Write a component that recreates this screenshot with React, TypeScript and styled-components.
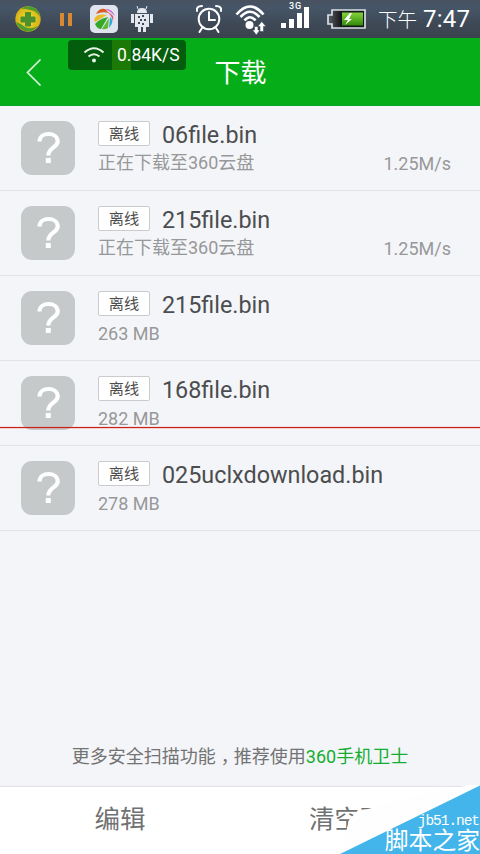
import React from "react";
import styled, { createGlobalStyle } from "styled-components";

const Global = createGlobalStyle`
  * { box-sizing: border-box; }
  body { margin: 0; background: #f4f5f8; font-family: Roboto, "Noto Sans CJK SC", sans-serif; overflow: hidden; }
`;

const Screen = styled.div`
  position: relative;
  display: flex;
  flex-direction: column;
  width: 480px;
  height: 854px;
  overflow: hidden;
  background: #f4f5f8;
`;

const StatusBar = styled.div`
  display: flex;
  align-items: center;
  height: 38px;
  flex: none;
  background: linear-gradient(#48515f 0, #465668 20%, #3e4855 65%, #3b424e 100%);
  color: #fff;
`;

const StatusIcons = styled.svg`
  display: block;
  flex: none;
`;

const DayPart = styled.span`
  width: 45px;
  margin-left: 8px;
  padding-top: 3px;
  font-size: 19.5px;
  font-weight: 300;
  line-height: 38px;
  white-space: nowrap;
`;

const Clock = styled.span`
  font-size: 24px;
  letter-spacing: 0.2px;
  line-height: 38px;
`;

const Header = styled.header`
  display: grid;
  grid-template-columns: 1fr auto 1fr;
  align-items: center;
  height: 68px;
  flex: none;
  background: #05ad19;
  border-bottom: 1px solid #07a42a;
`;

const Back = styled.svg`
  display: block;
  margin-left: 24px;
`;

const Title = styled.h1`
  margin: 0;
  padding: 3px 0 0 1px;
  color: #fff;
  font-size: 26px;
  font-weight: 400;
  line-height: 64px;
`;

const SpeedBadge = styled.div`
  position: absolute;
  left: 68px;
  top: 40px;
  width: 118px;
  height: 30px;
  display: flex;
  align-items: center;
  border-radius: 4px;
  background: linear-gradient(90deg, #025d0d 44px, #1c7905 44px, #1c7905 63px, #025d0d 63px);
  color: #fff;
  font-size: 17.5px;
`;

const BadgeWifi = styled.svg`
  display: block;
  width: 22px;
  height: 18px;
  margin: 0 12px 0 15px;
`;

const List = styled.ul`
  margin: 0;
  padding: 0;
  list-style: none;
`;

const Row = styled.li`
  display: flex;
  height: 85px;
  padding: 15px 29px 0 21px;
  border-bottom: 1px solid #e1e3e5;
`;

const FileIcon = styled.svg`
  display: block;
  flex: none;
  width: 54px;
  height: 54px;
  border-radius: 11px;
  background: #c5c9ca;
`;

const Details = styled.div`
  flex: 1;
  margin-left: 23px;
`;

const NameLine = styled.div`
  display: flex;
  height: 28px;
`;

const Tag = styled.span`
  width: 52px;
  height: 25px;
  border: 1px solid #c9cbcc;
  border-radius: 2px;
  background: #fff;
  color: #4c4c4c;
  font-size: 15.2px;
  line-height: 25px;
  text-align: center;
`;

const FileName = styled.span`
  margin-left: 12px;
  color: #4b4d4f;
  font-size: 23.35px;
  line-height: 28px;
`;

const MetaLine = styled.div`
  display: flex;
  justify-content: space-between;
  color: #979899;
  font-size: 18px;
  line-height: 28px;
`;

const Speed = styled.span`
  padding-top: 1px;
`;

const Size = styled.span`
  padding-top: 1px;
`;

const ScanLine = styled.div`
  position: absolute;
  left: 0;
  top: 426px;
  width: 480px;
  height: 3px;
  background: linear-gradient(rgba(225, 60, 50, 0.12) 1px, #c82318 1px, #c82318 2px, rgba(225, 60, 50, 0.2) 2px);
`;

const Promo = styled.p`
  margin: auto 0 0;
  padding-bottom: 14px;
  color: #727374;
  font-size: 18px;
  line-height: 30px;
  text-align: center;
`;

const Comma = styled.span`
  display: inline-block;
  width: 18px;
  padding-left: 5px;
  white-space: nowrap;
`;

const PromoLink = styled.span`
  color: #13ae31;
`;

const Actions = styled.footer`
  display: grid;
  grid-template-columns: 1fr 1fr;
  align-items: start;
  height: 68px;
  flex: none;
  border-top: 1px solid #e2e3e4;
  background: #fff;
`;

const Action = styled.button`
  border: 0;
  padding: 0;
  background: none;
  color: #707172;
  font: 25.5px/60px "Noto Sans CJK SC", sans-serif;
`;

const Watermark = styled.div`
  position: absolute;
  right: 0;
  bottom: 0;
  width: 140px;
  height: 70px;
  display: flex;
  flex-direction: column;
  align-items: flex-end;
  color: #fff;
`;

const WatermarkShape = styled.svg`
  position: absolute;
  inset: 0;
`;

const Site = styled.span`
  position: relative;
  margin-top: 29px;
  padding-right: 1px;
  font: 14.5px/16px "Liberation Mono", monospace;
  letter-spacing: -1.05px;
`;

const SiteName = styled.span`
  position: relative;
  font-size: 23.8px;
  line-height: 24px;
`;

const files: { name: string; size?: string; speed?: string }[] = [
  { name: "06file.bin", speed: "1.25M/s" },
  { name: "215file.bin", speed: "1.25M/s" },
  { name: "215file.bin", size: "263 MB" },
  { name: "168file.bin", size: "282 MB" },
  { name: "025uclxdownload.bin", size: "278 MB" },
];

const StatusDrawing = () => (
  <StatusIcons width="370" height="38" viewBox="0 0 370 38" fill="none">
    <defs>
      <radialGradient id="ball"><stop stopColor="#f5e72b" /><stop offset="1" stopColor="#d8ae19" /></radialGradient>
      <linearGradient id="charge" x2="0" y2="1"><stop stopColor="#83d33b" /><stop offset="1" stopColor="#318a09" /></linearGradient>
      <linearGradient id="casing"><stop stopColor="#5b6066" /><stop offset="0.35" stopColor="#15181b" /></linearGradient>
    </defs>
    <circle cx="28" cy="19" r="12.7" fill="url(#ball)" />
    <path d="M21 9Q29 3 37 10Q40 14 40 17Q36 10 30 10Q24 8 21 9ZM16 22Q22 24 25 27Q31 30 38 26Q33 32 26 31.500Q18 29 16 22Z" fill="#4e9c2c" />
    <path d="M25.500 12.500h5v4.500h4.500v5h-4.500v4h-5v-4h-4.500v-5h4.500z" fill="#4d912f" stroke="#4d912f" strokeLinejoin="round" />
    <path d="M60 13h4v13h-4zM68 13h4v13h-4z" fill="#d58a32" />
    <rect x="90" y="5" width="28" height="28" rx="5" fill="#dfe4ee" />
    <path d="M96 14Q99 8 105 9L109 13Q102 11 96 14Z" fill="#d75b22" />
    <path d="M105 9Q112 8 115 16Q110 11 105 9Z" fill="#cc72d8" />
    <path d="M94 20Q96 13 107 15L95 22Z" fill="#edba27" />
    <path d="M95 24Q99 19 108 17L101 29Q97 29 95 24Z" fill="#34a929" />
    <path d="M109 18L108 28Q105 30 102 29Z" fill="#62b832" />
    <path d="M110 17Q115 21 109 28Z" fill="#2caccc" />
    <path d="M107 12Q115 14 113 22Q112 15 107 12Z" fill="#e65067" />
    <path d="M137 13Q137 8 142 8Q147 8 147 13ZM135 14h14v13h-3v5h-3v-5h-2v5h-3v-5h-3zM131 14h3v9h-3zM150 14h3v9h-3z" fill="#e4e7ed" />
    <path d="M138 9l-1-3M146 9l1-3" stroke="#e4e7ed" />
    <path d="M138 16h2v2h-2zM142 15h2v2h-2zM140 19h2v2h-2zM144 19h2v2h-2zM138 22h2v2h-2zM142 23h2v2h-2z" fill="#3f4855" />
    <g stroke="#fff" strokeWidth="2" strokeLinecap="round">
      <circle cx="209" cy="19" r="10.300" />
      <path d="M209 12v8h6M202 28l-2.500 4M216 28l2.500 4M197 11Q196 6 202 6M216 6Q222 6 221 11" />
    </g>
    <g stroke="#fff" strokeWidth="2.700">
      <path d="M236.500 14.500Q250 -1.500 263.500 14.500M240.500 17Q250 6.500 259.500 17M244.500 20.500Q250 14 255.500 20.500" />
    </g>
    <circle cx="249.500" cy="25" r="4" fill="#fff" />
    <path d="M254.500 26.500h3.500v3.500h2l-3.700 5-3.800-5h2zM260 31.500h3.500v-5h2.500l-4.200-5-4.200 5h2.400z" fill="#fff" stroke="#414b59" strokeWidth="0.600" />
    <path d="M281 23h5v5h-5zM289 19h5v9h-5zM297 13h5v15h-5zM304 7h5v21h-5z" fill="#fff" />
    <text x="289" y="9" fill="#fff" fontFamily="Roboto, sans-serif" fontSize="9" fontWeight="500" letterSpacing="1">3G</text>
    <path d="M332 10h33v18h-33v-4h-4v-9h4z" fill="url(#casing)" stroke="#d9dee5" strokeWidth="1.700" />
    <path d="M342 12.500h21v13h-21z" fill="url(#charge)" />
    <path d="M350 13l-6 7h4l-3 5 7-6h-3l3-6z" fill="#fff" />
  </StatusIcons>
);

export default function App() {
  return (
    <Screen>
      <Global />
      <StatusBar>
        <StatusDrawing />
        <DayPart>下午</DayPart>
        <Clock>7:47</Clock>
      </StatusBar>
      <Header>
        <Back width="20" height="30" viewBox="0 0 20 30">
          <path d="M16.500 2.500L3.500 15.500L16.500 28.500" fill="none" stroke="#d9f5dc" strokeWidth="1.700" />
        </Back>
        <Title>下载</Title>
      </Header>
      <SpeedBadge>
        <BadgeWifi viewBox="0 0 22 18">
          <path d="M1.500 6.500Q11-2 20.500 6.500M5.500 10.500Q11 6 16.500 10.500" fill="none" stroke="#e5f4e6" strokeWidth="2" />
          <circle cx="11" cy="14.500" r="2" fill="#e5f4e6" />
        </BadgeWifi>
        0.84K/S
      </SpeedBadge>
      <List>
        {files.map((file, index) => (
          <Row key={index}>
            <FileIcon viewBox="0 0 54 54">
              <path d="M18.500 20.500C18.500 10.500 36.700 10.500 36.700 20.500C36.700 26.500 27.300 26.500 27.300 34.500" fill="none" stroke="#fff" strokeWidth="4.200" />
              <path d="M24.800 37h5v5h-5z" fill="#fff" />
            </FileIcon>
            <Details>
              <NameLine>
                <Tag>离线</Tag>
                <FileName>{file.name}</FileName>
              </NameLine>
              <MetaLine>
                {file.size ? <Size>{file.size}</Size> : <span>正在下载至360云盘</span>}
                {file.speed && <Speed>{file.speed}</Speed>}
              </MetaLine>
            </Details>
          </Row>
        ))}
      </List>
      <ScanLine />
      <Promo>
        更多安全扫描功能<Comma>，</Comma>推荐使用<PromoLink>360手机卫士</PromoLink>
      </Promo>
      <Actions>
        <Action>编辑</Action>
        <Action>清空下载</Action>
      </Actions>
      <Watermark>
        <WatermarkShape width="140" height="70" viewBox="0 0 140 70">
          <path d="M0 70L6 48L9 36L18 26L28 25L64 15L130 1L140 1V70Z" fill="#fefefe" />
          <path d="M0 70L140 1.500V70Z" fill="#43b5ea" />
        </WatermarkShape>
        <Site>jb51.net</Site>
        <SiteName>脚本之家</SiteName>
      </Watermark>
    </Screen>
  );
}
